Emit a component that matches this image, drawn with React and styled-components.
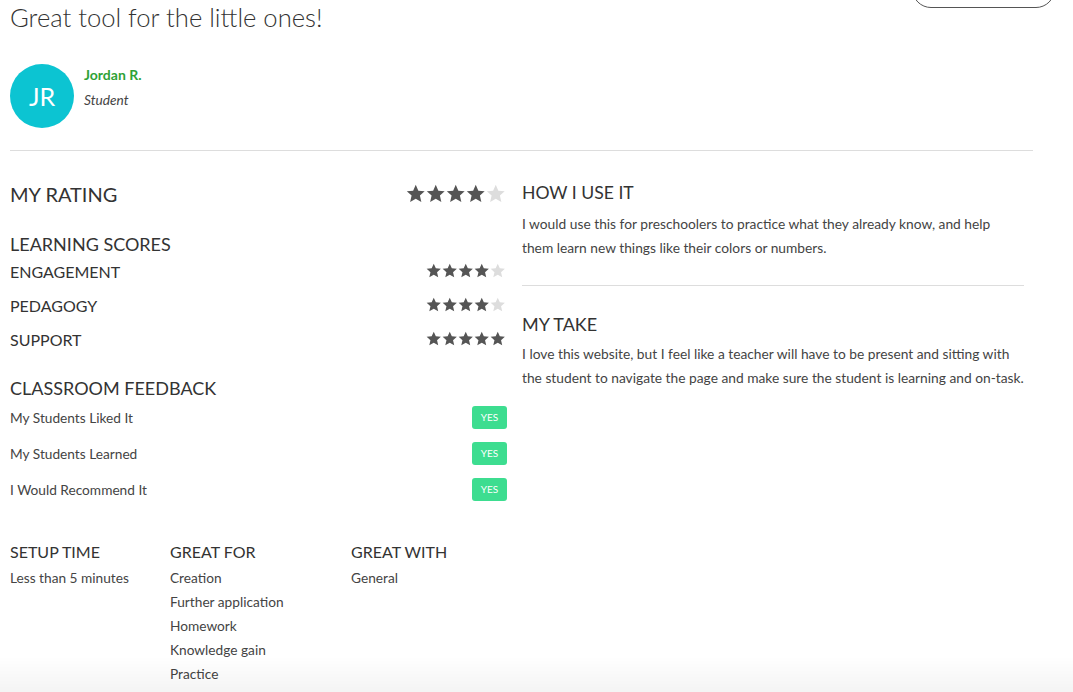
import React from 'react'
import styled, { createGlobalStyle } from 'styled-components'

const GlobalStyle = createGlobalStyle`
  html, body {
    margin: 0;
    padding: 0;
    background: #fff;
  }
  body {
    font-family: Lato, "Open Sans", "Liberation Sans", sans-serif;
    color: #333;
    overflow: hidden;
  }
`

const Page = styled.div`
  padding: 0 10px;
  width: 1045px;
`

const Header = styled.header`
  display: flex;
  justify-content: space-between;
  align-items: flex-start;
`

const Title = styled.h1`
  margin: 2px 0 0;
  font-size: 25.6px;
  line-height: 31px;
  font-weight: 300;
  color: #333;
`

const OutlineButton = styled.button`
  width: 143px;
  height: 38px;
  margin-top: -30px;
  border: 1px solid #555;
  border-radius: 20px;
  background: #fff;
`

const Author = styled.div`
  display: flex;
  align-items: flex-start;
  gap: 10px;
  margin-top: 31px;
  padding-bottom: 22px;
  border-bottom: 1px solid #ddd;
  width: 1023px;
`

const Avatar = styled.div`
  width: 64px;
  height: 64px;
  border-radius: 50%;
  background: #0cc4d2;
  color: #fff;
  display: flex;
  align-items: center;
  justify-content: center;
  font-size: 25px;
  font-weight: 400;
`

const AuthorInfo = styled.div`
  padding-top: 1px;
`

const AuthorName = styled.div`
  font-size: 14px;
  line-height: 20px;
  font-weight: 700;
  color: #2ea236;
  margin-bottom: 5px;
`

const AuthorRole = styled.div`
  font-size: 13.7px;
  line-height: 20px;
  font-style: italic;
  color: #444;
`

const Columns = styled.div`
  display: grid;
  grid-template-columns: 497px 502px;
  gap: 15px;
`

const LeftCol = styled.div`
  padding-top: 31px;
`

const RightCol = styled.div`
  padding-top: 30px;
`

const Group = styled.div`
  margin-top: ${(p) => -p.$shift}px;
  padding-bottom: ${(p) => p.$shift}px;
`

const Row = styled.div`
  display: flex;
  justify-content: space-between;
  align-items: center;
  height: ${(p) => p.$h || 24}px;
`

const Heading = styled.div`
  font-size: ${(p) => p.$size || 18}px;
  line-height: 24px;
  margin-top: ${(p) => p.$mt || 0}px;
  text-transform: uppercase;
  color: #333;
`

const ScoreLabel = styled.div`
  font-size: 16px;
  text-transform: uppercase;
  color: #333;
`

const Stars = styled.div`
  display: flex;
  gap: 0.5px;
  margin-right: 2px;
`

const Label = styled.div`
  font-size: 13.7px;
  color: #444;
`

const Badge = styled.span`
  display: inline-flex;
  align-items: center;
  justify-content: center;
  width: 35px;
  height: 23px;
  border-radius: 3px;
  background: #3ddd90;
  color: #fff;
  font-size: 10px;
`

const Details = styled.div`
  display: grid;
  grid-template-columns: 160px 181px 1fr;
  margin-top: 32px;
`

const DetailTitle = styled.div`
  font-size: 16px;
  line-height: 24px;
  text-transform: uppercase;
  color: #333;
  margin-bottom: 2px;
`

const DetailItem = styled.div`
  font-size: 13.7px;
  line-height: 24px;
  color: #444;
`

const Paragraph = styled.p`
  margin: ${(p) => p.$mt || 7}px 0 0;
  font-size: 13.78px;
  line-height: 24px;
  color: #444;
`

const Divider = styled.hr`
  margin: 25px 0 0;
  border: 0;
  border-top: 1px solid #ddd;
`

const BottomFade = styled.div`
  position: fixed;
  left: 0;
  right: 0;
  bottom: 0;
  height: 36px;
  background: linear-gradient(rgba(0, 0, 0, 0), rgba(0, 0, 0, 0.045));
  pointer-events: none;
`

const Star = ({ size, filled }) => (
  <svg width={size} height={size} viewBox="0 0 24 24">
    <path
      d="M12 1l3.2 7.2 7.8.8-5.9 5.2 1.8 7.8L12 18l-6.9 4 1.8-7.8L1 9l7.8-.8z"
      fill={filled ? '#555' : '#ddd'}
    />
  </svg>
)

const StarRating = ({ value, size }) => (
  <Stars>
    {[1, 2, 3, 4, 5].map((i) => (
      <Star key={i} size={size} filled={i <= value} />
    ))}
  </Stars>
)

const scores = [
  { name: 'Engagement', value: 4 },
  { name: 'Pedagogy', value: 4 },
  { name: 'Support', value: 5 },
]

const feedback = ['My Students Liked It', 'My Students Learned', 'I Would Recommend It']

const details = [
  { title: 'Setup time', items: ['Less than 5 minutes'] },
  {
    title: 'Great for',
    items: ['Creation', 'Further application', 'Homework', 'Knowledge gain', 'Practice'],
  },
  { title: 'Great with', items: ['General'] },
]

export default function App() {
  return (
    <>
      <GlobalStyle />
      <Page>
        <Header>
          <Title>Great tool for the little ones!</Title>
          <OutlineButton />
        </Header>

        <Author>
          <Avatar>JR</Avatar>
          <AuthorInfo>
            <AuthorName>Jordan R.</AuthorName>
            <AuthorRole>Student</AuthorRole>
          </AuthorInfo>
        </Author>

        <Columns>
          <LeftCol>
            <Row>
              <Heading $size={20}>My rating</Heading>
              <StarRating value={4} size={19.5} />
            </Row>

            <Heading $mt={26}>Learning scores</Heading>
            <Group $shift={2}>
              {scores.map((s) => (
                <Row key={s.name} $h={34}>
                  <ScoreLabel>{s.name}</ScoreLabel>
                  <StarRating value={s.value} size={15.5} />
                </Row>
              ))}
            </Group>

            <Heading $mt={18}>Classroom feedback</Heading>
            <Group $shift={1}>
              {feedback.map((f) => (
                <Row key={f} $h={36}>
                  <Label>{f}</Label>
                  <Badge>YES</Badge>
                </Row>
              ))}
            </Group>

            <Details>
              {details.map((d) => (
                <div key={d.title}>
                  <DetailTitle>{d.title}</DetailTitle>
                  {d.items.map((item) => (
                    <DetailItem key={item}>{item}</DetailItem>
                  ))}
                </div>
              ))}
            </Details>
          </LeftCol>

          <RightCol>
            <Heading $size={17.6}>How I use it</Heading>
            <Paragraph>
              I would use this for preschoolers to practice what they already know, and help
              them learn new things like their colors or numbers.
            </Paragraph>
            <Divider />
            <Heading $mt={26}>My take</Heading>
            <Paragraph $mt={6}>
              I love this website, but I feel like a teacher will have to be present and sitting
              with the student to navigate the page and make sure the student is learning and
              on-task.
            </Paragraph>
          </RightCol>
        </Columns>
      </Page>
      <BottomFade />
    </>
  )
}
